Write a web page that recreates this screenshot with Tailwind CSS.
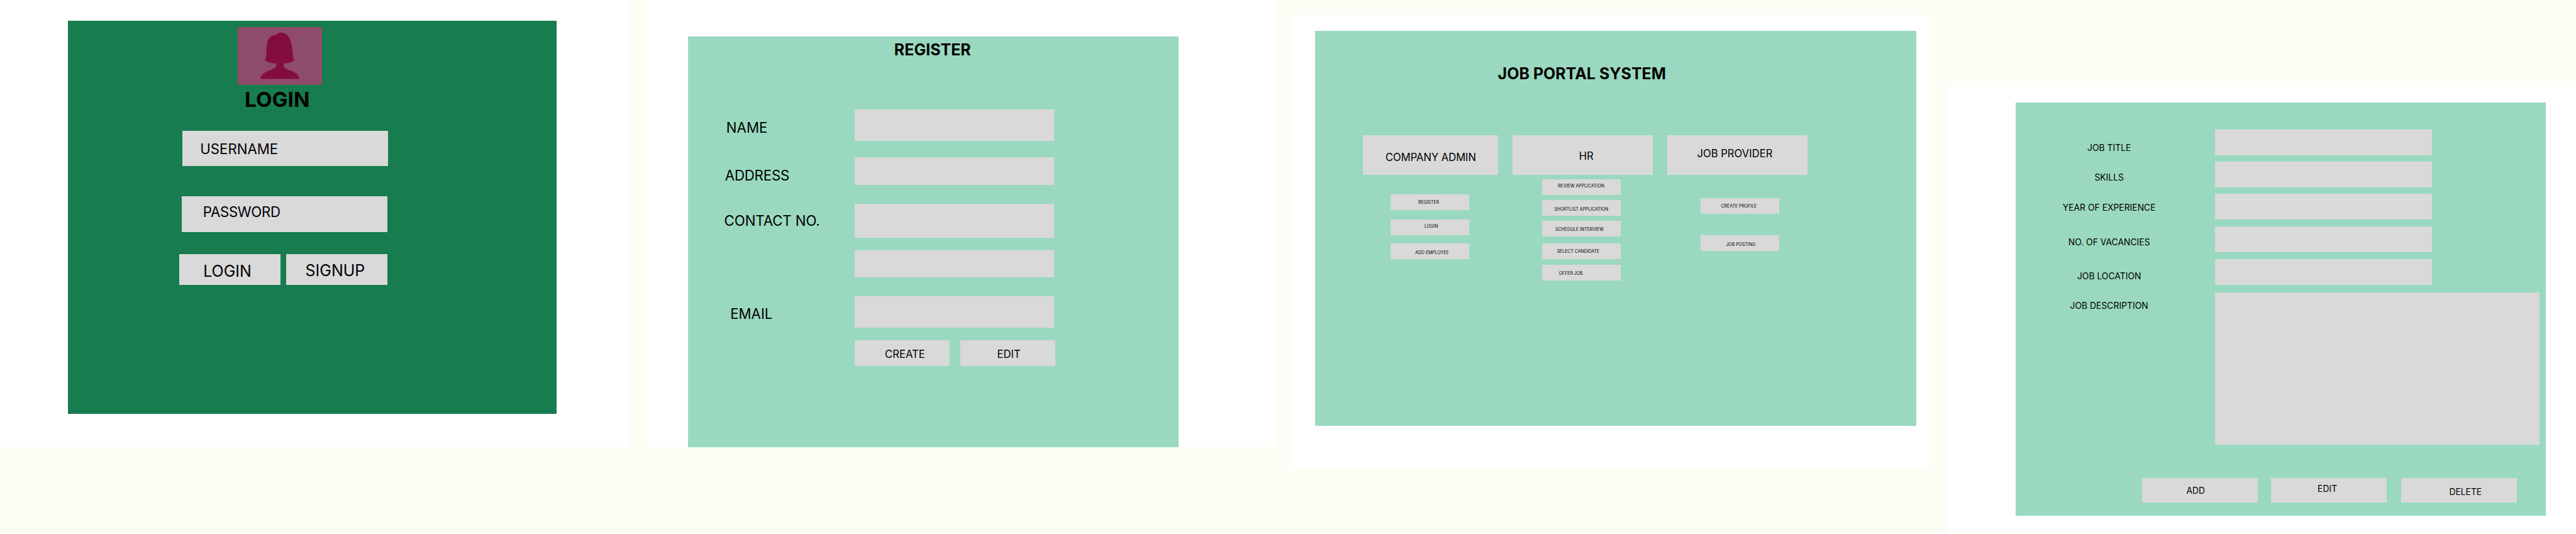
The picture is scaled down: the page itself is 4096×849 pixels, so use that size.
<!DOCTYPE html>
<html lang="en">
<head>
<meta charset="utf-8">
<title>Job Portal System</title>
<script src="https://cdn.jsdelivr.net/npm/@tailwindcss/browser@4"></script>
</head>
<body class="overflow-hidden bg-[#fcfdf4]">
<div class="flex h-[1223px] w-[5899px] items-start overflow-hidden bg-[#fcfdf4] font-['Inter',sans-serif] leading-none whitespace-nowrap text-black [zoom:0.694355]">

  <!-- Login -->
  <section class="h-[1024px] w-[1441px] shrink-0 bg-white pt-[47px] pl-[156px]">
    <div class="flex h-[900px] w-[1118px] flex-col items-start bg-[#177c4f] pt-[15px]">
      <svg class="ml-[389px] h-[132px] w-[193px] shrink-0 bg-[#8f4b6b]" viewBox="75 66 579 396" preserveAspectRatio="none">
        <path fill="#830d41" d="M340 120C350 108 360 104 372 104C402 105 422 124 435 150C449 182 451 232 455 268C457 282 460 288 467 293C445 308 420 316 390 317V328C392 345 405 352 425 360C470 376 497 392 497 423H232C232 392 258 376 300 361C325 352 338 342 340 328V317C305 315 280 308 260 293C270 280 271 262 272 240C274 175 280 121 340 120Z"/>
      </svg>
      <h1 class="mt-[10.7px] ml-[404.3px] text-[48px] leading-none font-bold">LOGIN</h1>
      <div class="mt-[46.3px] ml-[262px] h-[82px] w-[471px] bg-[#d9d9d9] pt-[26.9px] pl-[40.5px] text-[32px] leading-none">USERNAME</div>
      <div class="mt-[68px] ml-[260px] h-[82px] w-[471px] bg-[#d9d9d9] pt-[20.6px] pl-[49px] text-[32px] leading-none tracking-[-0.5px]">PASSWORD</div>
      <div class="mt-[51px] ml-[255px] flex gap-[14px] text-[36px] leading-none">
        <div class="h-[70px] w-[231px] bg-[#d9d9d9] pt-[20.9px] pl-[54.5px]">LOGIN</div>
        <div class="h-[70px] w-[231px] bg-[#d9d9d9] pt-[19.6px] pl-[43.3px]">SIGNUP</div>
      </div>
    </div>
  </section>

  <!-- Register -->
  <section class="ml-[39px] h-[1024px] w-[1440px] shrink-0 bg-white pt-[83px] pl-[96px]">
    <div class="flex h-[941px] w-[1123.5px] flex-col items-start bg-[#9ad9bf] pt-[13px]">
      <h1 class="ml-[471.7px] text-[36px] leading-none font-bold">REGISTER</h1>
      <div class="mt-[119px] flex text-[32px] leading-none">
        <div class="w-[381px] pt-[25.8px] pl-[87.2px]">NAME</div>
        <div class="h-[72px] w-[457px] bg-[#d9d9d9]"></div>
      </div>
      <div class="mt-[37px] flex text-[32px] leading-none">
        <div class="w-[381px] pt-[26.5px] pl-[84.2px] tracking-[-0.25px]">ADDRESS</div>
        <div class="h-[64px] w-[457px] bg-[#d9d9d9]"></div>
      </div>
      <div class="mt-[43px] flex text-[32px] leading-none">
        <div class="w-[381px] pt-[22.5px] pl-[82.5px] tracking-[-0.1px]">CONTACT NO.</div>
        <div class="h-[78px] w-[457px] bg-[#d9d9d9]"></div>
      </div>
      <div class="mt-[28px] ml-[381px] h-[62px] w-[457px] bg-[#d9d9d9]"></div>
      <div class="mt-[43px] flex text-[32px] leading-none">
        <div class="w-[381px] pt-[25.5px] pl-[96.3px]">EMAIL</div>
        <div class="h-[72px] w-[457px] bg-[#d9d9d9]"></div>
      </div>
      <div class="mt-[29px] ml-[381px] flex gap-[24px] text-[24px] leading-none">
        <div class="h-[59px] w-[218px] bg-[#d9d9d9] pt-[20.8px] pl-[69.4px]">CREATE</div>
        <div class="h-[59px] w-[218px] bg-[#d9d9d9] pt-[20.8px] pl-[84.3px]">EDIT</div>
      </div>
    </div>
  </section>

  <!-- Job portal system -->
  <section class="mt-[35px] ml-[40px] h-[1038px] w-[1458px] shrink-0 bg-white pt-[36px] pl-[51px]">
    <div class="flex h-[904px] w-[1377.5px] flex-col items-start bg-[#9ad9bf] pt-[80.5px]">
      <h1 class="ml-[419px] text-[36px] leading-none font-bold">JOB PORTAL SYSTEM</h1>
      <div class="mt-[121.5px] ml-[109.5px] flex items-start text-[10px] leading-none">
        <div class="w-[309.5px]">
          <div class="h-[91.5px] bg-[#d9d9d9] pt-[39.5px] pl-[52.2px] text-[24px] leading-none tracking-[-0.1px]">COMPANY ADMIN</div>
          <div class="mt-[44.5px] ml-[63.5px] h-[36px] w-[180px] bg-[#d9d9d9] pt-[15.1px] pl-[63.6px]">REGISTER</div>
          <div class="mt-[22px] ml-[63.5px] h-[36px] w-[180px] bg-[#d9d9d9] pt-[11.8px] pl-[78.2px]">LOGIN</div>
          <div class="mt-[18px] ml-[63.5px] h-[36px] w-[180px] bg-[#d9d9d9] pt-[17.1px] pl-[56.7px]">ADD EMPLOYEE</div>
        </div>
        <div class="ml-[34px] w-[321px]">
          <div class="h-[91.5px] bg-[#d9d9d9] pt-[36.8px] pl-[152px] text-[24px] leading-none">HR</div>
          <div class="mt-[9.5px] ml-[68px] h-[36px] w-[180px] bg-[#d9d9d9] pt-[11.8px] pl-[35.9px]">REVIEW APPLICATION</div>
          <div class="mt-[12px] ml-[68px] h-[36px] w-[180px] bg-[#d9d9d9] pt-[16.8px] pl-[27.3px]">SHORTLIST APPLICATION</div>
          <div class="mt-[12px] ml-[68px] h-[36px] w-[180px] bg-[#d9d9d9] pt-[14.8px] pl-[29.8px]">SCHEDULE INTERVIEW</div>
          <div class="mt-[15px] ml-[68px] h-[36px] w-[180px] bg-[#d9d9d9] pt-[15.1px] pl-[33.5px]">SELECT CANDIDATE</div>
          <div class="mt-[13px] ml-[68px] h-[36px] w-[180px] bg-[#d9d9d9] pt-[16.1px] pl-[38px]">OFFER JOB</div>
        </div>
        <div class="ml-[33px] w-[321.5px]">
          <div class="h-[91.5px] bg-[#d9d9d9] pt-[30.8px] pl-[68.3px] text-[24px] leading-none">JOB PROVIDER</div>
          <div class="mt-[52.5px] ml-[77px] h-[36px] w-[180px] bg-[#d9d9d9] pt-[15.8px] pl-[46.2px]">CREATE PROFILE</div>
          <div class="mt-[50px] ml-[77px] h-[36px] w-[180px] bg-[#d9d9d9] pt-[17.1px] pl-[57.6px]">JOB POSTING</div>
        </div>
      </div>
    </div>
  </section>

  <!-- Job posting -->
  <section class="mt-[198px] ml-[41px] h-[1025px] w-[1440px] shrink-0 bg-white pt-[37px] pl-[157px]">
    <div class="flex h-[946px] w-[1214px] flex-col items-start bg-[#9ad9bf] pt-[62px] text-[20px] leading-none">
      <div class="flex">
        <div class="mr-[28px] w-[428px] pt-[32.2px] text-center">JOB TITLE</div>
        <div class="h-[59px] w-[498px] bg-[#d9d9d9]"></div>
      </div>
      <div class="mt-[14px] flex">
        <div class="mr-[28px] w-[428px] pt-[28.2px] text-center">SKILLS</div>
        <div class="h-[59px] w-[498px] bg-[#d9d9d9]"></div>
      </div>
      <div class="mt-[15px] flex">
        <div class="mr-[28px] w-[428px] pt-[23.2px] text-center">YEAR OF EXPERIENCE</div>
        <div class="h-[59px] w-[498px] bg-[#d9d9d9]"></div>
      </div>
      <div class="mt-[15px] flex">
        <div class="mr-[28px] w-[428px] pt-[28.2px] text-center">NO. OF VACANCIES</div>
        <div class="h-[59px] w-[498px] bg-[#d9d9d9]"></div>
      </div>
      <div class="mt-[17px] flex">
        <div class="mr-[28px] w-[428px] pt-[30.2px] text-center">JOB LOCATION</div>
        <div class="h-[59px] w-[498px] bg-[#d9d9d9]"></div>
      </div>
      <div class="mt-[17px] flex">
        <div class="mr-[28px] w-[428px] pt-[20.9px] text-center">JOB DESCRIPTION</div>
        <div class="h-[349px] w-[744px] bg-[#d9d9d9]"></div>
      </div>
      <div class="mt-[76px] ml-[289px] flex">
        <div class="h-[56px] w-[266px] bg-[#d9d9d9] pt-[19.2px] pl-[101.8px]">ADD</div>
        <div class="ml-[29px] h-[56px] w-[266px] bg-[#d9d9d9] pt-[15.2px] pl-[107.3px]">EDIT</div>
        <div class="ml-[32.5px] h-[56px] w-[266px] bg-[#d9d9d9] pt-[23.2px] pl-[110.3px]">DELETE</div>
      </div>
    </div>
  </section>
</div>
</body>
</html>
